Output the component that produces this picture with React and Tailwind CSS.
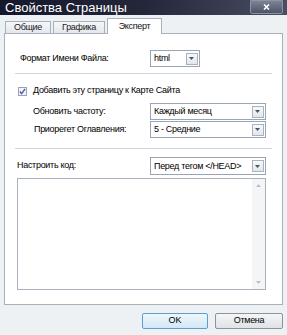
import React from "react";

const font = { fontFamily: '"Liberation Sans", "DejaVu Sans", sans-serif' };

function Arrow() {
  return (
    <div className="w-[15px] h-full flex items-center justify-center bg-white">
      <div className="w-[12px] h-[12px] border border-[#a9b2bf] bg-gradient-to-b from-[#f7f8fa] to-[#e2e6eb] flex items-center justify-center">
        <svg width="5" height="3" viewBox="0 0 5 3"><path d="M0 0h5L2.5 3z" fill="#4a5563" /></svg>
      </div>
    </div>
  );
}

function Select({ value, className = "" }) {
  return (
    <div className={"h-[17px] border border-[#9aa5b3] bg-white flex items-stretch " + className}>
      <div className="flex-1 pl-[3px] flex items-center text-[9px] tracking-[-0.3px] text-black leading-none whitespace-nowrap overflow-hidden">{value}</div>
      <Arrow />
    </div>
  );
}

const label = "text-[9px] tracking-[-0.3px] text-black whitespace-nowrap";

export default function App() {
  return (
    <div className="w-[287px] h-[335px] bg-[#eef1f4] flex flex-col overflow-hidden" style={font}>
      <div className="h-[15px] bg-gradient-to-r from-[#15172a] via-[#24273a] to-[#4a4e63] flex items-center justify-between pl-[5px] pr-[4px]">
        <span className="text-white text-[13px] leading-none">Свойства Страницы</span>
        <div className="w-[33px] h-[14px] -mt-[1px] border border-[#8d93a3] rounded-b-[2px] bg-gradient-to-b from-[#7c8396] to-[#4f5568] flex items-center justify-center">
          <svg width="7" height="6" viewBox="0 0 7 6"><path d="M1 0.5l5 5M6 0.5l-5 5" stroke="#ffffff" strokeWidth="1.6" /></svg>
        </div>
      </div>
      <div className="h-[18px] pl-[5px] flex items-end gap-[2px]">
        <div className="w-[46px] h-[12px] border border-b-0 border-[#a8b0bb] bg-gradient-to-b from-[#f6f7f9] to-[#e3e7ec] flex items-center justify-center text-[9px] tracking-[-0.3px] text-[#222]">Общие</div>
        <div className="w-[52px] h-[12px] border border-b-0 border-[#a8b0bb] bg-gradient-to-b from-[#f6f7f9] to-[#e3e7ec] flex items-center justify-center text-[9px] tracking-[-0.3px] text-[#222]">Графика</div>
        <div className="w-[55px] h-[16px] -mb-[1px] border border-b-0 border-[#a8b0bb] bg-white relative z-10 flex items-center justify-center text-[9px] tracking-[-0.3px] text-[#111]">Эксперт</div>
      </div>
      <div className="mx-[4px] h-[272px] border border-[#a8b0bb] bg-white flex flex-col px-[12px]">
        <div className="flex items-center mt-[16px] h-[17px]">
          <span className={"w-[133px] pl-[3px] " + label}>Формат Имени Файла:</span>
          <Select value="html" className="w-[50px]" />
        </div>
        <div className="h-px bg-[#d3d6db] mt-[6px] mx-[-2px]" />
        <div className="flex items-center mt-[11px] h-[12px] gap-[6px] pl-[1px]">
          <div className="w-[9px] h-[9px] border border-[#9aa3b0] bg-[#f3f4f7] flex items-center justify-center">
            <svg width="8" height="7" viewBox="0 0 8 7"><path d="M1 3.5l2 2.5L7 0.5" stroke="#4a55b8" strokeWidth="1.5" fill="none" /></svg>
          </div>
          <span className={label}>Добавить эту страницу к Карте Сайта</span>
        </div>
        <div className="flex items-center mt-[6px] h-[17px]">
          <span className={"w-[133px] pl-[16px] " + label}>Обновить частоту:</span>
          <Select value="Каждый месяц" className="flex-1 mr-[4px]" />
        </div>
        <div className="flex items-center mt-[1px] h-[17px]">
          <span className={"w-[133px] pl-[17px] " + label}>Приорегет Оглавления:</span>
          <Select value="5 - Средние" className="flex-1 mr-[4px]" />
        </div>
        <div className="h-px bg-[#d3d6db] mt-[10px] mx-[-2px]" />
        <div className="flex items-center mt-[8px] h-[18px]">
          <span className={"w-[133px] " + label}>Настроить код:</span>
          <Select value="Перед тегом </HEAD>" className="flex-1 mr-[4px] h-[18px]" />
        </div>
        <div className="mt-[3px] mr-[4px] h-[112px] border border-[#a9b2bf] bg-white flex justify-end">
          <div className="w-[13px] h-full bg-[#f4f5f7] flex flex-col items-center justify-between py-[5px]">
            <svg width="5" height="3" viewBox="0 0 5 3"><path d="M0 3h5L2.5 0z" fill="#b9bfc8" /></svg>
            <svg width="5" height="3" viewBox="0 0 5 3"><path d="M0 0h5L2.5 3z" fill="#b9bfc8" /></svg>
          </div>
        </div>
      </div>
      <div className="flex justify-end gap-[7px] pr-[4px] mt-[8px]">
        <div className="w-[66px] h-[16px] border border-[#5a9fd0] rounded-[2px] bg-gradient-to-b from-[#eef7fd] to-[#d2e7f5] flex items-center justify-center text-[9px] text-black">OK</div>
        <div className="w-[68px] h-[16px] border border-[#8b939e] rounded-[2px] bg-gradient-to-b from-[#f5f6f7] to-[#dfe2e6] flex items-center justify-center text-[9px] tracking-[-0.3px] text-black">Отмена</div>
      </div>
    </div>
  );
}
